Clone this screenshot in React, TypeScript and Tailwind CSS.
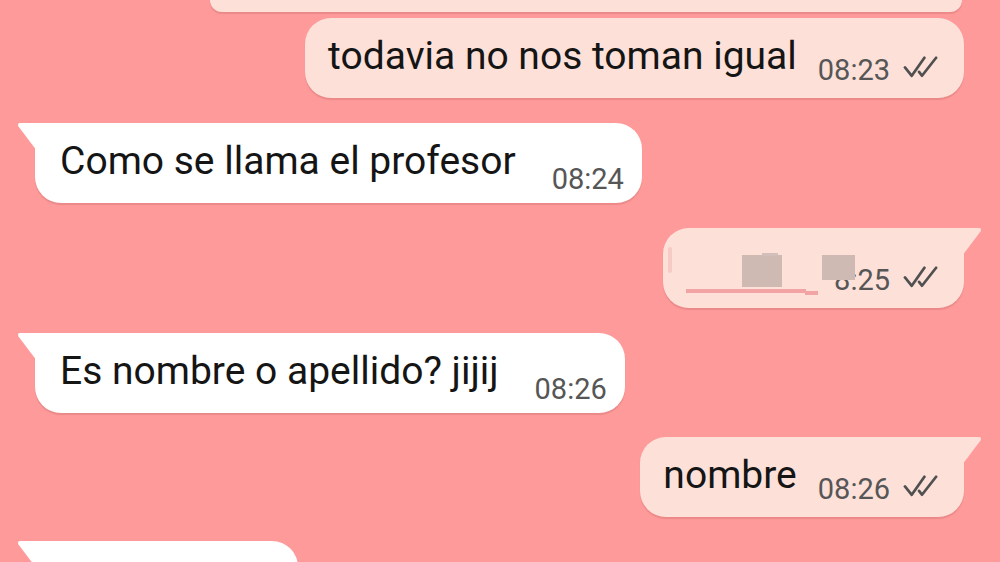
import type { ReactNode } from "react";

const font = { fontFamily: "Roboto, 'Noto Sans', sans-serif" };

const Checks = () => (
  <svg viewBox="0 0 38 22" className="w-[37px] h-[22px] ml-[13px] mt-[23px] shrink-0" fill="none">
    <path d="M2 11.5 L9 20 L22 1.5" stroke="#505050" strokeWidth="2.8" strokeLinecap="round" strokeLinejoin="round" />
    <path d="M16.5 16 L19.5 20 L34 1.5" stroke="#505050" strokeWidth="2.8" strokeLinecap="round" strokeLinejoin="round" />
  </svg>
);

const TailLeft = () => (
  <svg viewBox="0 0 20 28" className="absolute -left-[18px] top-0 w-[20px] h-[28px]">
    <path d="M3 0 H20 V28 L1.5 3.5 Q0 0 3 0 Z" fill="#ffffff" />
  </svg>
);

const TailRight = () => (
  <svg viewBox="0 0 20 28" className="absolute -right-[18px] top-0 w-[20px] h-[28px]">
    <path d="M17 0 H0 V28 L18.5 3.5 Q20 0 17 0 Z" fill="#fde1d9" />
  </svg>
);

interface BubbleProps {
  out?: boolean;
  tail?: boolean;
  children: ReactNode;
}

const Bubble = ({ out, tail, children }: BubbleProps) => {
  const shape = out
    ? tail
      ? "rounded-[26px] rounded-tr-none bg-[#fde1d9]"
      : "rounded-[26px] bg-[#fde1d9]"
    : tail
    ? "rounded-[26px] rounded-tl-none bg-white"
    : "rounded-[26px] bg-white";
  return (
    <div className={out ? "flex justify-end pr-[36px]" : "flex justify-start pl-[35px]"}>
      <div
        className={`relative h-[80px] flex items-start pt-[15px] shadow-[0_2px_1px_rgba(150,60,60,0.18)] ${shape} ${
          out ? "pl-[23px] pr-[24px]" : "pl-[25px] pr-[18px]"
        }`}
      >
        {tail && (out ? <TailRight /> : <TailLeft />)}
        {children}
      </div>
    </div>
  );
};

const Msg = ({ children }: { children: ReactNode }) => (
  <span className="text-[39px] leading-[46px] text-[#151515] whitespace-nowrap">{children}</span>
);

const Time = ({ children, out }: { children: ReactNode; out?: boolean }) => (
  <span
    className={`text-[29px] leading-[34px] text-[#565656] whitespace-nowrap ${
      out ? "ml-[21px] mt-[20px]" : "ml-[36px] mt-[24px]"
    }`}
  >
    {children}
  </span>
);

export default function App() {
  return (
    <div className="w-[1000px] h-[562px] overflow-hidden bg-[#fe9a9a]" style={font}>
      <div className="flex flex-col">
        <div className="flex justify-end pr-[38px]">
          <div className="w-[752px] h-[12px] rounded-b-[22px] bg-[#fde1d9] shadow-[0_2px_1px_rgba(150,60,60,0.18)]" />
        </div>

        <div className="mt-[6px]">
          <Bubble out>
            <Msg>todavia no nos toman igual</Msg>
            <Time out>08:23</Time>
            <Checks />
          </Bubble>
        </div>

        <div className="mt-[25px]">
          <Bubble tail>
            <Msg>Como se llama el profesor</Msg>
            <Time>08:24</Time>
          </Bubble>
        </div>

        <div className="mt-[25px]">
          <Bubble out tail>
            <div className="relative w-[111px] h-[54px]">
              <div className="absolute -left-[18px] top-[4px] w-[4px] h-[26px] rounded-full bg-[#f7cbc5]" />
              <div className="absolute left-[56px] top-[12px] w-[40px] h-[32px] bg-[#cfb9b3]" />
              <div className="absolute left-[76px] top-[10px] w-[16px] h-[3px] bg-[#d3bfb9]" />
              <div className="absolute left-[0px] top-[46px] w-[120px] h-[4px] bg-[#f2a3a3]" />
              <div className="absolute left-[119px] top-[48px] w-[28px] h-[4px] bg-[#f2a3a3]" />
            </div>
            <span className="relative text-[29px] leading-[34px] text-[#565656] whitespace-nowrap mt-[20px] ml-[21px]">
              08:25
              <span className="absolute left-0 top-0 w-[16px] h-[34px] bg-[#fde1d9]" />
              <span className="absolute left-[4px] -top-[8px] w-[33px] h-[25px] bg-[#cfb9b3]" />
            </span>
            <Checks />
          </Bubble>
        </div>

        <div className="mt-[25px]">
          <Bubble tail>
            <Msg>Es nombre o apellido? jijij</Msg>
            <Time>08:26</Time>
          </Bubble>
        </div>

        <div className="mt-[24px]">
          <Bubble out tail>
            <Msg>nombre</Msg>
            <Time out>08:26</Time>
            <Checks />
          </Bubble>
        </div>

        <div className="mt-[24px]">
          <Bubble tail>
            <div className="w-[220px]">
              <Msg>Dale</Msg>
            </div>
          </Bubble>
        </div>
      </div>
    </div>
  );
}
